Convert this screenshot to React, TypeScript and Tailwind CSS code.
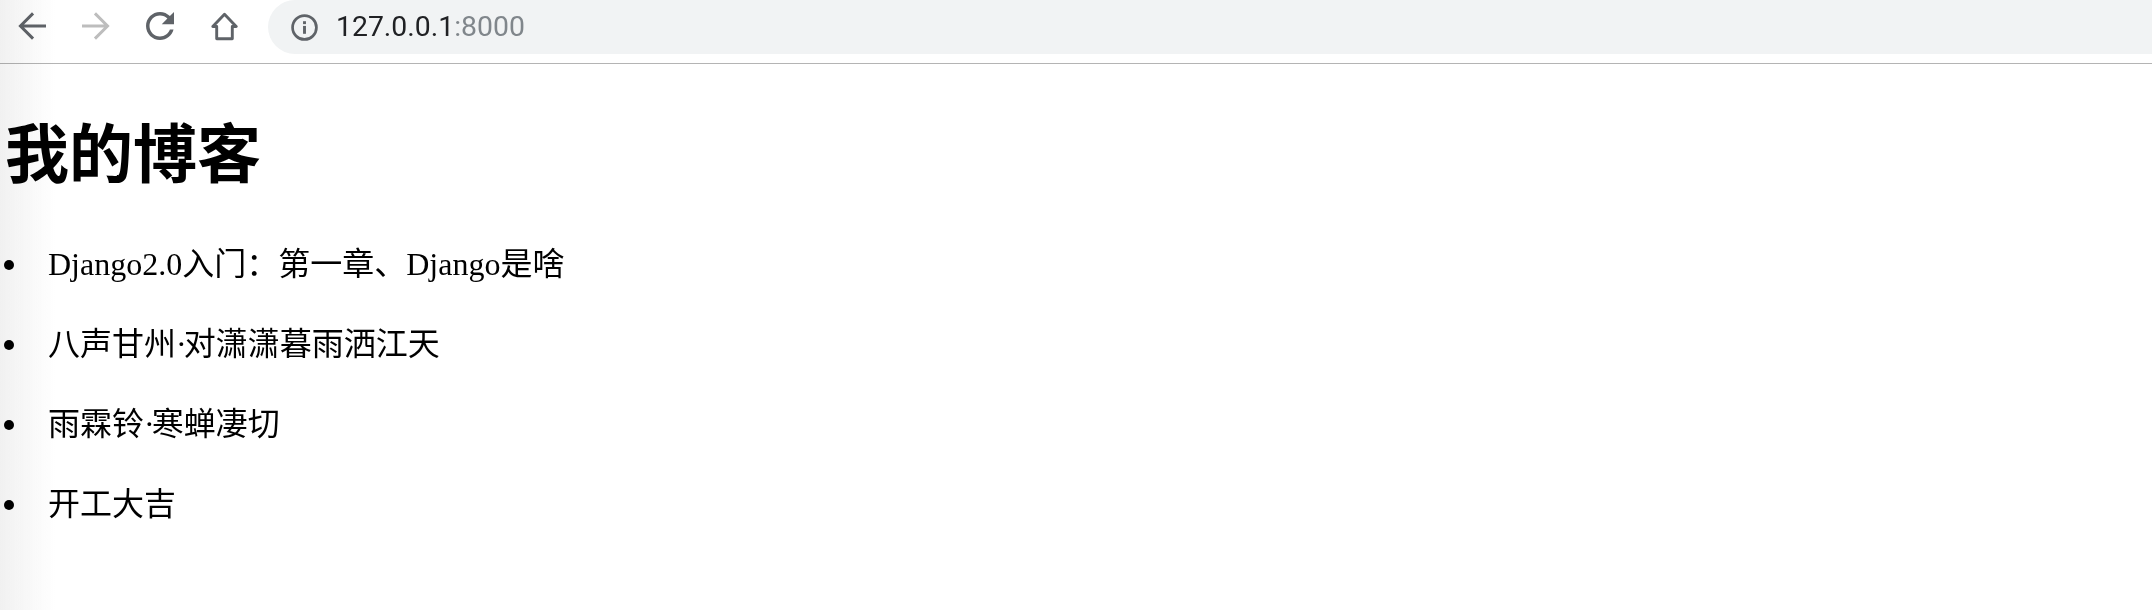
import React from 'react';

const serif = "font-['Liberation_Serif','Noto_Sans_CJK_SC',serif]";

const posts = [
  'Django2.0入门：第一章、Django是啥',
  '八声甘州·对潇潇暮雨洒江天',
  '雨霖铃·寒蝉凄切',
  '开工大吉',
];

const BackIcon = ({ color }: { color: string }) => (
  <svg viewBox="0 0 24 24" width="42" height="42" className={color} fill="none" stroke="currentColor" strokeWidth="1.7">
    <path d="M20 12H5.5M12.6 4.8 5.4 12l7.2 7.2" />
  </svg>
);

const ForwardIcon = ({ color }: { color: string }) => (
  <svg viewBox="0 0 24 24" width="42" height="42" className={color} fill="none" stroke="currentColor" strokeWidth="1.7">
    <path d="M4 12h14.5M11.4 4.8l7.2 7.2-7.2 7.2" />
  </svg>
);

const ReloadIcon = () => (
  <svg viewBox="0 0 24 24" width="42" height="42" className="text-[#5f6368]" fill="currentColor">
    <path d="M17.65 6.35C16.2 4.9 14.21 4 12 4c-4.42 0-7.99 3.58-7.99 8s3.57 8 7.99 8c3.73 0 6.84-2.55 7.73-6h-2.08c-.82 2.33-3.04 4-5.65 4-3.31 0-6-2.69-6-6s2.69-6 6-6c1.66 0 3.14.69 4.22 1.78L13 11h7V4l-2.35 2.35z" />
  </svg>
);

const HomeIcon = () => (
  <svg viewBox="0 0 24 26" width="27" height="29" className="text-[#5f6368]" fill="none" stroke="currentColor" strokeWidth="2.6" strokeLinejoin="round">
    <path d="M12 2 L22.5 13 H19 V24 H5 V13 H1.5 Z" />
  </svg>
);

const InfoIcon = () => (
  <svg viewBox="0 0 24 24" width="27" height="27" className="text-[#5f6368]" fill="none">
    <circle cx="12" cy="12" r="10.6" stroke="currentColor" strokeWidth="2.4" />
    <rect x="10.7" y="10.6" width="2.6" height="7" fill="currentColor" />
    <rect x="10.7" y="6.4" width="2.6" height="2.6" fill="currentColor" />
  </svg>
);

// the middle dot sets a little wide in this font stack, so pull it in
const PostTitle = ({ title }: { title: string }) => {
  const parts = title.split('·');
  if (parts.length === 1) return <>{title}</>;
  return (
    <>
      {parts[0]}
      <span className="tracking-[-3px]">·</span>
      {parts[1]}
    </>
  );
};

export default function App() {
  return (
    <div className="relative h-[610px] overflow-hidden bg-white">
      <div className="flex h-16 items-start border-b border-[#b4b4b4] bg-white">
        <div className="flex h-[52px] w-[268px] items-center">
          <div className="flex w-[64px] justify-center"><BackIcon color="text-[#5f6368]" /></div>
          <div className="flex w-[64px] justify-center"><ForwardIcon color="text-[#bdbdbd]" /></div>
          <div className="flex w-[64px] justify-center"><ReloadIcon /></div>
          <div className="flex w-[64px] justify-center"><HomeIcon /></div>
        </div>
        <div className="flex h-[54px] flex-1 items-center rounded-l-[27px] bg-[#f1f3f4] pl-[23px]">
          <InfoIcon />
          <span className="ml-[18px] font-['Roboto',sans-serif] text-[28.4px] text-[#202124]">
            127.0.0.1<span className="text-[#80868b]">:8000</span>
          </span>
        </div>
      </div>

      <div className={`${serif} text-black`}>
        <h1 className="mt-[55px] pl-[5px] text-[64px] leading-[74px] font-bold">我的博客</h1>
        <ul className="mt-[53px]">
          {posts.map((post) => (
            <li key={post} className="flex h-[80px] items-start">
              <span className="mt-[14px] ml-[4px] h-[10px] w-[10px] rounded-full bg-black" />
              <span className="ml-[34px] text-[32px] leading-[37px]"><PostTitle title={post} /></span>
            </li>
          ))}
        </ul>
      </div>

      {/* soft shadow along the left edge of the window */}
      <div className="pointer-events-none absolute inset-y-0 left-0 w-[56px] bg-gradient-to-r from-[#f1f1f1] to-transparent mix-blend-multiply" />
    </div>
  );
}
